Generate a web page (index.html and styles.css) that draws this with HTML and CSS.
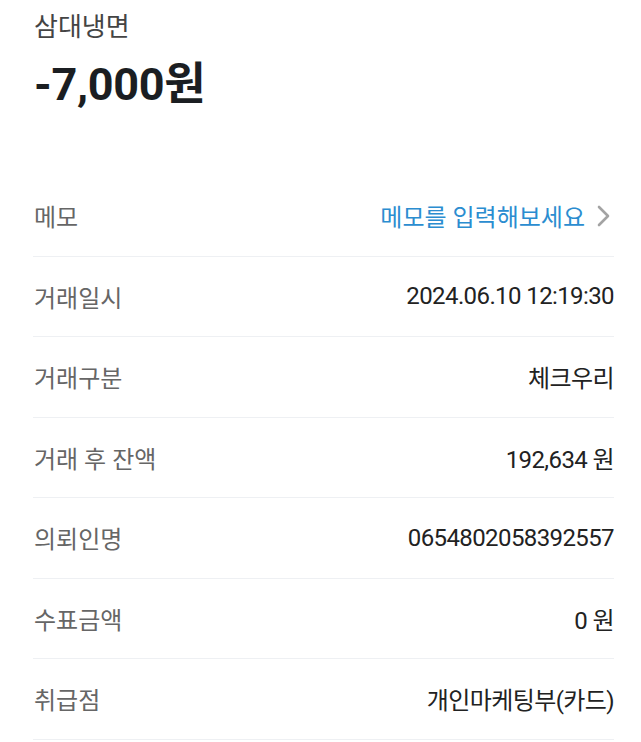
FILE: index.html
```html
<!DOCTYPE html>
<html lang='ko'>
<head>
<meta charset='UTF-8'>
<meta name='viewport' content='width=device-width, initial-scale=1.0'>
<title>거래내역 상세</title>
<link rel="stylesheet" href="styles.css">
</head>
<body>
  <!-- ---------- SUMMARY ---------- -->
  <header class='summary'>
    <p class='merchant'>삼대냉면</p>
    <h1 class='amount'>-7,000원</h1>
  </header>

  <!-- ---------- DETAIL ROWS ---------- -->
  <ul class='details'>
    <li class='row'>
      <span class='label'>메모</span>
      <a class='memo-link' href='#'>메모를 입력해보세요
        <svg class='chev' width='13' height='22' viewBox='0 0 13 22'><polyline points='2,2 11,11 2,20' fill='none' stroke='#a3a3a3' stroke-width='2.6' stroke-linecap='round' stroke-linejoin='round'/></svg>
      </a>
    </li>
    <li class='row'><span class='label'>거래일시</span><span class='value'>2024.06.10 12:19:30</span></li>
    <li class='row'><span class='label'>거래구분</span><span class='value'>체크우리</span></li>
    <li class='row'><span class='label'>거래 후 잔액</span><span class='value'>192,634 원</span></li>
    <li class='row'><span class='label'>의뢰인명</span><span class='value'>0654802058392557</span></li>
    <li class='row'><span class='label'>수표금액</span><span class='value'>0 원</span></li>
    <li class='row'><span class='label'>취급점</span><span class='value'>개인마케팅부(카드)</span></li>
  </ul>
</body>
</html>
```

FILE: styles.css
```css
/* ---------- GLOBAL ---------- */
*{box-sizing:border-box;margin:0;padding:0;}
body{
  font-family:Roboto,'Noto Sans CJK KR',sans-serif;
  background:#fff;color:#222;padding:0 27px 0 33px;
}
/* Summary */
.summary{padding:12px 0 0 1px;}
.merchant{font-size:26px;line-height:30px;color:#444;}
.amount{font-size:45px;font-weight:700;line-height:56px;margin-top:15px;color:#1b1e22;letter-spacing:-.3px;}
/* Rows */
.details{list-style:none;margin-top:63px;}
.row{
  display:flex;justify-content:space-between;align-items:center;
  height:80.5px;border-bottom:1px solid #eef0f3;padding-left:1px;
}
.label{font-size:24px;color:#666;}
.value{font-size:24px;color:#222;letter-spacing:-.6px;}
.memo-link{
  display:flex;align-items:center;gap:12px;font-size:24px;color:#2b8dd0;text-decoration:none;
}
.chev{margin-right:4px;}
```
